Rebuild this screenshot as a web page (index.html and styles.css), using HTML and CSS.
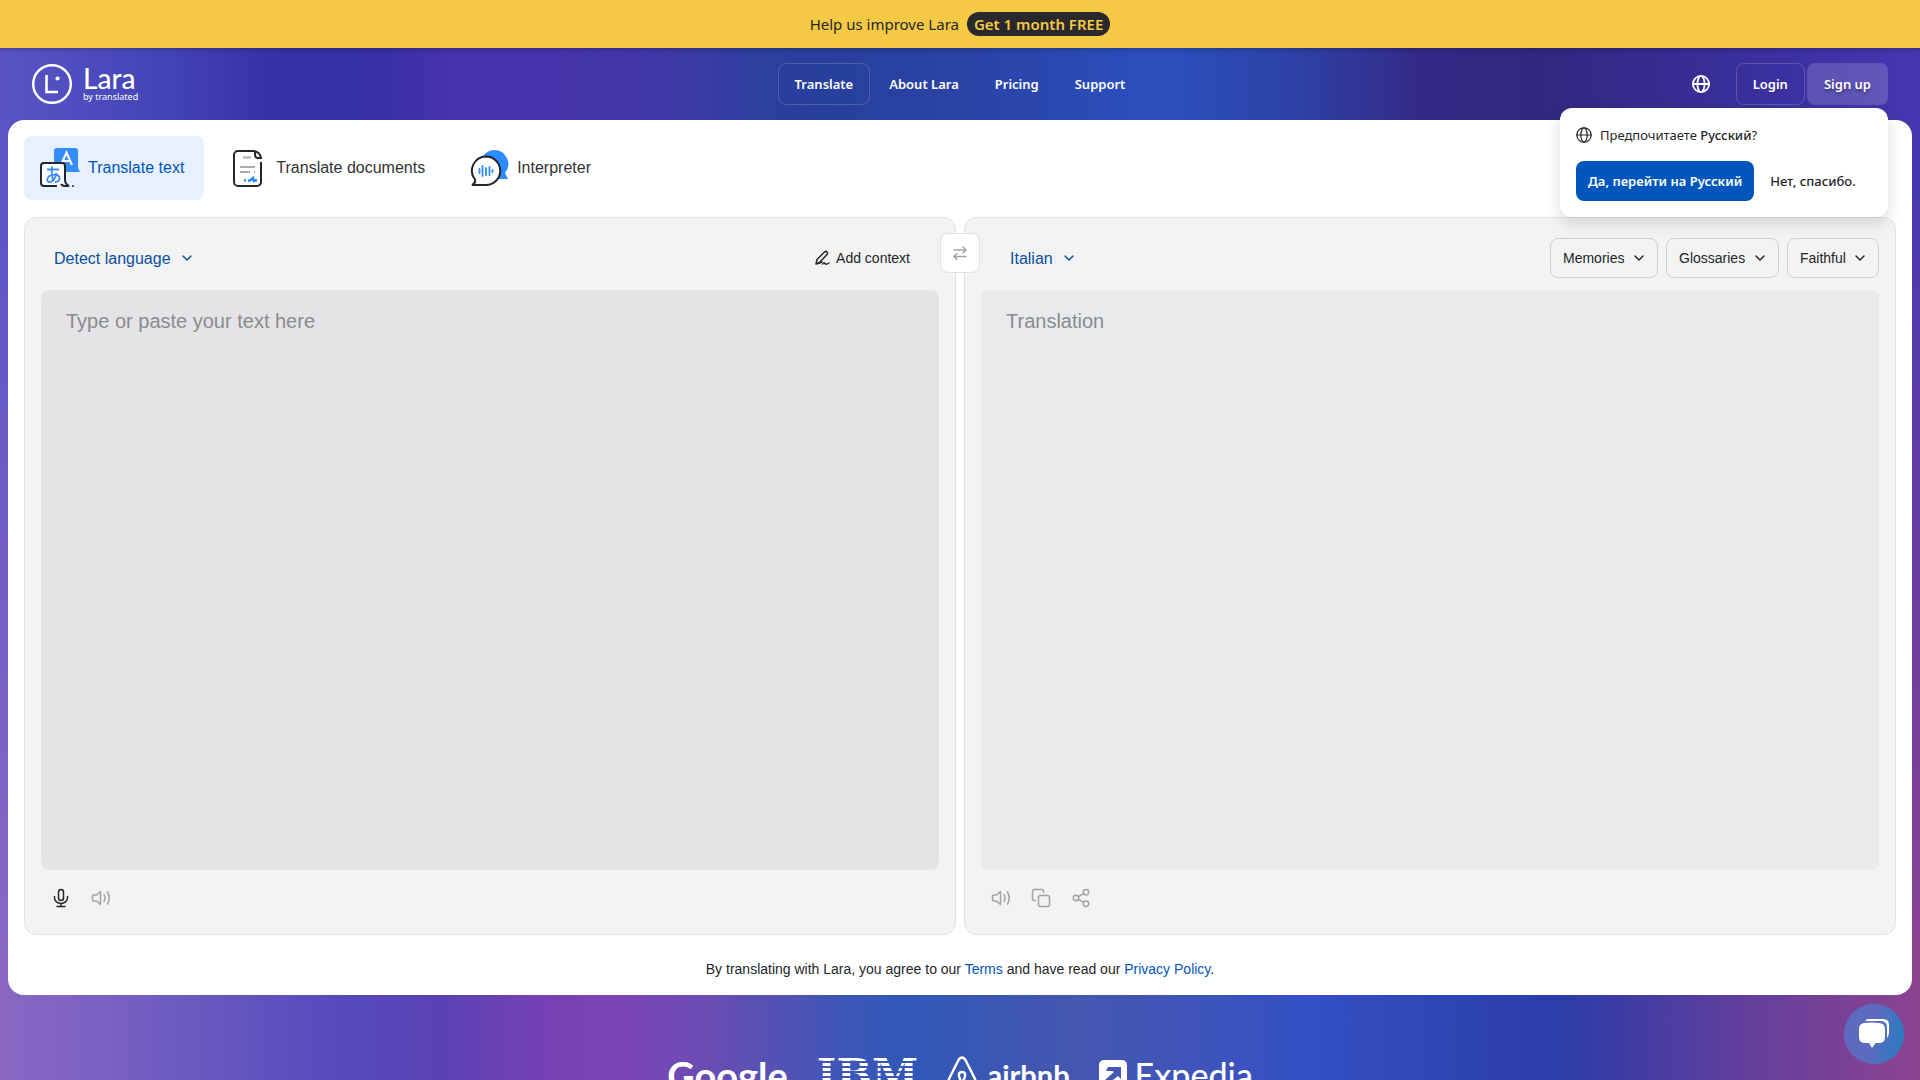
FILE: index.html
```html
<!DOCTYPE html>
<html lang="en">
<head>
    <meta charset="UTF-8">
    <meta name="viewport" content="width=device-width, initial-scale=1.0">
    <title>Lara Translate</title>
    <link rel="stylesheet" href="styles.css">
</head>
<body>
    <svg class="sprite" aria-hidden="true">
        <symbol id="globe" viewBox="0 0 20 20">
            <circle cx="10" cy="10" r="9"/>
            <ellipse cx="10" cy="10" rx="4" ry="9"/>
            <path d="M1 10h18"/>
        </symbol>
        <symbol id="chevron" viewBox="0 0 10 6">
            <path d="M1 1l4 4 4-4"/>
        </symbol>
        <symbol id="speaker" viewBox="0 0 20 20">
            <path d="M9.500 3.500v13L5.500 13H2.500a1 1 0 0 1-1-1V8a1 1 0 0 1 1-1h3zM13 6.500q2 3.500 0 7M16.500 4q3.500 6 0 12"/>
        </symbol>
    </svg>

    <div class="banner">
        <span>Help us improve Lara</span>
        <a class="banner-pill" href="#">Get 1 month FREE</a>
    </div>

    <div class="app">
        <header class="header">
            <a class="logo" href="#">
                <svg class="logo-mark" viewBox="0 0 40 40" aria-hidden="true">
                    <circle cx="20" cy="20" r="18.800" fill="none" stroke="#fff" stroke-width="2.400"/>
                    <path d="M14.500 11v17H26" fill="none" stroke="#fff" stroke-width="2.600"/>
                    <circle cx="25.500" cy="14.500" r="2.100" fill="#fff"/>
                </svg>
                <span class="logo-text">
                    <span class="logo-name">Lara</span>
                    <span class="logo-sub">by translated</span>
                </span>
            </a>
            <nav class="nav">
                <a class="nav-link outlined" href="#">Translate</a>
                <a class="nav-link" href="#">About Lara</a>
                <a class="nav-link" href="#">Pricing</a>
                <a class="nav-link" href="#">Support</a>
            </nav>
            <div class="account">
                <button class="globe-button" type="button" aria-label="Language">
                    <svg class="icon globe"><use href="#globe"/></svg>
                </button>
                <a class="nav-link outlined" href="#">Login</a>
                <a class="nav-link filled" href="#">Sign up</a>
                <div class="popup" lang="ru">
                    <p class="popup-title">
                        <svg class="icon globe-small"><use href="#globe"/></svg>
                        <span>Предпочитаете <b>Русский</b>?</span>
                    </p>
                    <div class="popup-actions">
                        <button class="popup-yes" type="button">Да, перейти на Русский</button>
                        <button class="popup-no" type="button">Нет, спасибо.</button>
                    </div>
                </div>
            </div>
        </header>

        <main class="card">
            <div class="tabs">
                <a class="tab active" href="#">
                    <svg class="tab-icon" viewBox="0 0 40 40" aria-hidden="true">
                        <path d="M17 0h18a3 3 0 0 1 3 3v15q0 3 2 6H17a3 3 0 0 1-3-3V3a3 3 0 0 1 3-3z" fill="#358ef7"/>
                        <path d="M21 17L26.500 4.500 32 17M23 13h7" fill="none" stroke="#fff" stroke-width="2"/>
                        <path d="M17 38H4a3 3 0 0 1-3-3V18a3 3 0 0 1 3-3h18a3 3 0 0 1 3 3v14q0 4 4 6h-4q-3 0-4-2" fill="#fff" stroke="#242629" stroke-width="2"/>
                        <circle cx="33" cy="38" r="1" fill="#242629"/>
                        <path d="M7 21.500h12M12 18.500q-1 7 1 15M16.500 25q-2 9-7 9c-3 0-3-4 0-6 4-2.500 10-1.500 10 2 0 2.500-2 4-4.500 4" fill="none" stroke="#358ef7" stroke-width="1.800"/>
                    </svg>
                    Translate text
                </a>
                <a class="tab" href="#">
                    <svg class="tab-icon" viewBox="0 0 40 40" aria-hidden="true">
                        <path d="M33 14v20a4 4 0 0 1-4 4H10a4 4 0 0 1-4-4V7a4 4 0 0 1 4-4h16q6 1 7 7h-3q-3 0-3-3V3" fill="none" stroke="#242629" stroke-width="2"/>
                        <path d="M15 9.500h8M12 19h15M12 24h10M26 24h1" stroke="#a9abae" stroke-width="2"/>
                        <path d="M16 32.500h2M20 33l3-1 2-2 1 3 3-1" fill="none" stroke="#2b8cff" stroke-width="2.500"/>
                    </svg>
                    Translate documents
                </a>
                <a class="tab" href="#">
                    <svg class="tab-icon" viewBox="0 0 40 40" aria-hidden="true">
                        <path d="M25 2a14 14 0 0 1 11 23l3 6H26L12 12A14 14 0 0 1 25 2z" fill="#2b8cff"/>
                        <path d="M17 8.500A14.200 14.200 0 1 1 17 37H3q4-2 3-5.500A14.200 14.200 0 0 1 17 8.500z" fill="#fff" stroke="#242629" stroke-width="2"/>
                        <path d="M10.500 21v4M13.500 18v10M17 20v7M20.500 19v8M23.500 22v2" stroke="#2b8cff" stroke-width="1.800" stroke-linecap="round"/>
                    </svg>
                    Interpreter
                </a>
            </div>

            <div class="panels">
                <section class="panel">
                    <div class="panel-head">
                        <div class="dropdown language">
                            <select aria-label="Source language"><option>Detect language</option></select>
                            <svg class="icon chevron"><use href="#chevron"/></svg>
                        </div>
                        <button class="context" type="button">
                            <svg class="icon pencil" viewBox="0 0 16 16"><path d="M2 14l1-4.500L10.500 2a1.500 1.500 0 0 1 2.500 2.500L5.500 12.500 2 14c2 0 4-.500 6-2M8.500 14q1.500-2 2.500-.500t4-.500"/></svg>
                            Add context
                        </button>
                    </div>
                    <textarea class="text" aria-label="Source text" placeholder="Type or paste your text here"></textarea>
                    <div class="tools">
                        <button class="tool dark" type="button" aria-label="Dictate">
                            <svg class="icon" viewBox="0 0 20 20"><rect x="7.500" y="1.500" width="5" height="11" rx="2.500"/><path d="M3.500 8.500v1.500a6.500 5.500 0 0 0 13 0V8.500M10 15.500V18M6 18.500h8"/></svg>
                        </button>
                        <button class="tool" type="button" aria-label="Listen">
                            <svg class="icon"><use href="#speaker"/></svg>
                        </button>
                    </div>
                </section>

                <button class="swap" type="button" aria-label="Swap languages">
                    <svg class="icon" viewBox="0 0 14 14"><path d="M1 4h12M10 1l3 3-3 3M13 10.500H1M4 7.500l-3 3 3 3"/></svg>
                </button>

                <section class="panel result">
                    <div class="panel-head">
                        <div class="dropdown language">
                            <select aria-label="Target language"><option>Italian</option></select>
                            <svg class="icon chevron"><use href="#chevron"/></svg>
                        </div>
                        <div class="options">
                            <div class="dropdown boxed">
                                <select aria-label="Memories"><option>Memories</option></select>
                                <svg class="icon chevron"><use href="#chevron"/></svg>
                            </div>
                            <div class="dropdown boxed">
                                <select aria-label="Glossaries"><option>Glossaries</option></select>
                                <svg class="icon chevron"><use href="#chevron"/></svg>
                            </div>
                            <div class="dropdown boxed">
                                <select aria-label="Style"><option>Faithful</option></select>
                                <svg class="icon chevron"><use href="#chevron"/></svg>
                            </div>
                        </div>
                    </div>
                    <textarea class="text" aria-label="Translation" placeholder="Translation" readonly></textarea>
                    <div class="tools">
                        <button class="tool" type="button" aria-label="Listen">
                            <svg class="icon"><use href="#speaker"/></svg>
                        </button>
                        <button class="tool" type="button" aria-label="Copy">
                            <svg class="icon" viewBox="0 0 20 20"><rect x="7.500" y="7.500" width="11" height="11" rx="2"/><path d="M4.500 12.500h-1a2 2 0 0 1-2-2v-7a2 2 0 0 1 2-2h7a2 2 0 0 1 2 2v1"/></svg>
                        </button>
                        <button class="tool" type="button" aria-label="Share">
                            <svg class="icon" viewBox="0 0 20 20"><circle cx="5" cy="10" r="2.700"/><circle cx="15" cy="4.200" r="2.700"/><circle cx="15" cy="15.800" r="2.700"/><path d="M7.500 8.700l5-3M7.500 11.300l5 3"/></svg>
                        </button>
                    </div>
                </section>
            </div>

            <p class="terms">By translating with Lara, you agree to our <a href="#">Terms</a> and have read our <a href="#">Privacy Policy</a>.</p>
        </main>
    </div>

    <section class="clients">
        <span class="client google">Google</span>
        <span class="client ibm">IBM</span>
        <span class="client airbnb">
            <svg class="airbnb-mark" viewBox="0 0 30 34" fill="none" stroke="#fff" stroke-width="2.400" aria-hidden="true">
                <path d="M15 1.500c-2 0-3 1.500-4 3.500L2 23c-2 5 1 9 5 9 3 0 6-3 9-7 3-5 3-9-1-9s-4 4-1 9c3 4 6 7 9 7 4 0 7-4 5-9L19 5c-1-2-2-3.500-4-3.500z"/>
            </svg>
            airbnb
        </span>
        <span class="client expedia">
            <svg class="expedia-mark" viewBox="0 0 28 28" aria-hidden="true">
                <rect width="28" height="28" rx="5" fill="#fff"/>
                <path d="M9 7h13v12l-3-3-9 7H6v-3l9-8-2-1H7z" fill="#4557b4"/>
            </svg>
            Expedia
        </span>
    </section>

    <button class="chat" type="button" aria-label="Open chat">
        <svg viewBox="0 0 32 32" aria-hidden="true">
            <path d="M7 3q1-2 4-2h13c6 0 7 2 7 7v6c0 3-1 5-2 6V10c0-5-2-7-7-7z" fill="#fff"/>
            <path d="M6 5q7.500-1 15 0 6 .500 6 6v8q0 6-6 6h-3.500l-3.500 5-3-5H7q-6 0-6-6v-8q0-5 5-6z" fill="#fff"/>
        </svg>
    </button>
</body>
</html>
```

FILE: styles.css
```css
* {
    box-sizing: border-box;
}

body {
    margin: 0;
    height: 100vh;
    overflow: hidden;
    position: relative;
    font-family: "Liberation Sans", Arial, sans-serif;
    font-size: 14px;
    color: #242629;
    background: linear-gradient(90deg, #8a68c4 0%, #7c61c2 5%, #6a5abf 10%, #5549bd 18%, #5b42b4 23%, #7841b4 29%, #7c43b5 32%, #6a4db2 37%, #3d56b7 44%, #3158b8 47%, #4557b0 56%, #4055b8 61%, #3450c4 68%, #2a3da8 81%, #3b3ca5 84%, #633f9c 91%, #8c4391 100%);
}

/* upper half of the page gradient, fades into the lower one */
body::before {
    content: "";
    position: absolute;
    inset: 0;
    z-index: -1;
    background: linear-gradient(90deg, #5a54c6 0%, #4446b8 8%, #3632a9 14%, #3430a8 17%, #3830a8 20%, #4932ae 24%, #4933ae 27%, #4238a8 34%, #2b3f9d 40%, #27409c 43%, #2a43a6 51%, #2c4cb9 58%, #2c4ebc 61%, #2d43a8 67%, #342a86 74%, #32287f 80%, #3a309f 92%, #4638b0 100%);
    mask-image: linear-gradient(#000 15%, transparent 88%);
}

button, select, textarea {
    font-family: inherit;
    font-size: 14px;
    color: inherit;
    background: none;
    border: none;
    margin: 0;
    padding: 0;
}

button, select {
    cursor: pointer;
}

a {
    color: #0056bb;
    text-decoration: none;
}

.sprite {
    display: none;
}

.icon {
    width: 20px;
    height: 20px;
    fill: none;
    stroke: currentColor;
    stroke-width: 1.5;
    stroke-linecap: round;
    stroke-linejoin: round;
    flex: none;
}

.banner {
    height: 48px;
    display: flex;
    align-items: center;
    justify-content: center;
    gap: 8px;
    background: #f6c945;
    font-family: "Noto Sans", sans-serif;
    font-size: 15px;
}

.banner-pill {
    padding: 0 7px;
    line-height: 24px;
    border-radius: 12px;
    background: #29282d;
    color: #f6c945;
    font-weight: 600;
}

.app {
    min-height: calc(100vh - 133px);
    display: flex;
    flex-direction: column;
}

.header {
    height: 72px;
    padding: 0 32px;
    display: grid;
    grid-template-columns: 1fr auto 1fr;
    align-items: center;
    font-family: "Noto Sans", sans-serif;
    box-shadow: inset 0 6px 6px -6px rgba(0, 0, 0, 0.35);
}

.logo {
    display: flex;
    align-items: center;
    gap: 11px;
    color: #fff;
}

.logo-mark {
    width: 40px;
    height: 40px;
}

.logo-text {
    display: flex;
    flex-direction: column;
}

.logo-name {
    font-family: Lato, sans-serif;
    font-size: 28px;
    line-height: 26px;
    font-weight: 500;
}

.logo-sub {
    font-size: 9px;
    line-height: 12px;
}

.nav, .account {
    display: flex;
    align-items: center;
    gap: 2px;
}

.account {
    position: relative;
    justify-content: flex-end;
}

.nav-link {
    padding: 0 16px;
    line-height: 40px;
    border: 1px solid transparent;
    border-radius: 8px;
    color: #fff;
    font-size: 13px;
    font-weight: 600;
}

.outlined {
    border-color: rgba(255, 255, 255, 0.18);
}

.filled {
    background: rgba(255, 255, 255, 0.16);
    text-shadow: 0 2px 3px rgba(0, 0, 0, 0.4);
}

.globe-button {
    padding: 0 24px;
    height: 40px;
    display: flex;
    align-items: center;
    color: #fff;
}

.globe {
    width: 18px;
    height: 18px;
    stroke-width: 2;
}

.globe-small {
    width: 16px;
    height: 16px;
}

.popup {
    position: absolute;
    top: 45px;
    right: 0;
    z-index: 2;
    width: 328px;
    padding: 16px;
    border-radius: 12px;
    background: #fff;
    box-shadow: 0 6px 16px rgba(0, 0, 0, 0.14);
    font-size: 13px;
}

.popup-title {
    margin: 0 0 15px;
    display: flex;
    align-items: center;
    gap: 8px;
    line-height: 22px;
}

.popup-title b {
    font-weight: 500;
}

.popup-actions {
    display: flex;
    gap: 4px;
}

.popup-actions button {
    height: 40px;
    padding: 0 12px;
    border-radius: 8px;
    font-size: 13px;
    font-weight: 500;
    white-space: nowrap;
}

.popup-actions .popup-yes {
    background: #0056bb;
    color: #fff;
    font-weight: 600;
}

.card {
    flex: 1;
    display: flex;
    flex-direction: column;
    margin: 0 8px;
    padding: 16px;
    border-radius: 16px;
    background: #fff;
}

.tabs {
    display: flex;
    gap: 8px;
    margin-bottom: 17px;
}

.tab {
    height: 64px;
    padding: 0 20px 0 16px;
    display: flex;
    align-items: center;
    gap: 8px;
    border-radius: 8px;
    color: #333;
    font-size: 16px;
}

.tab.active {
    background: #e6f0ff;
    color: #0056bb;
}

.tab-icon {
    width: 40px;
    height: 40px;
}

.panels {
    position: relative;
    flex: 1;
    display: grid;
    grid-template-columns: 1fr 1fr;
    gap: 8px;
}

.panel {
    display: flex;
    flex-direction: column;
    padding: 20px 16px 16px;
    border: 1px solid #e2e2e3;
    border-radius: 12px;
    background: #f3f3f3;
}

.panel-head {
    height: 40px;
    margin-bottom: 12px;
    padding: 0 29px 0 13px;
    display: flex;
    align-items: center;
    justify-content: space-between;
}

.result .panel-head {
    padding: 0 0 0 29px;
}

.dropdown {
    display: flex;
    align-items: center;
}

.dropdown select {
    appearance: none;
    height: 40px;
}

.chevron {
    width: 10px;
    height: 6px;
    pointer-events: none;
}

.language {
    color: #0c4f9f;
}

.language select {
    padding-right: 21px;
    font-size: 16px;
}

.language .chevron {
    margin-left: -10px;
}

.options {
    display: flex;
    gap: 8px;
}

.boxed select {
    padding: 0 32px 0 12px;
    border: 1px solid #cfcfd1;
    border-radius: 8px;
}

.boxed .chevron {
    margin: 0 14px 0 -24px;
}

.context {
    display: flex;
    align-items: center;
    gap: 6px;
}

.pencil {
    width: 16px;
    height: 16px;
}

.text {
    flex: 1;
    width: 100%;
    padding: 19px 25px;
    border-radius: 8px;
    background: #e4e4e6;
    font-size: 20px;
    line-height: 24px;
    resize: none;
}

.text::placeholder {
    color: #8a8a8f;
}

.result .text {
    background: #e9eaec;
}

.tools {
    display: flex;
    margin-top: 8px;
}

.tool {
    width: 40px;
    height: 40px;
    display: flex;
    align-items: center;
    justify-content: center;
    color: #a3a3a5;
}

.tool.dark {
    color: #242629;
}

.swap {
    position: absolute;
    top: 16px;
    left: calc(50% - 20px);
    width: 40px;
    height: 40px;
    display: flex;
    align-items: center;
    justify-content: center;
    border: 1px solid #e0e0e2;
    border-radius: 8px;
    background: #fff;
    color: #a3a3a5;
}

.swap .icon {
    width: 14px;
    height: 14px;
}

.terms {
    margin: 24px 0 0;
    text-align: center;
    line-height: 20px;
}

.clients {
    display: flex;
    justify-content: center;
    align-items: flex-start;
    gap: 29px;
    padding-top: 56px;
    color: #fff;
}

.client {
    display: flex;
    font-family: Lato, sans-serif;
    font-size: 38px;
    line-height: 48px;
    font-weight: bold;
}

/* striped letters */
.ibm {
    font-family: "DejaVu Serif", serif;
    font-size: 42px;
    color: transparent;
    background: repeating-linear-gradient(transparent 0 2px, #fff 2px 5px);
    background-clip: text;
}

.airbnb {
    gap: 10px;
    font-size: 29px;
}

.airbnb-mark {
    width: 30px;
    height: 34px;
    margin-top: 5px;
}

.expedia {
    gap: 8px;
    font-size: 34px;
    font-weight: 500;
}

.expedia-mark {
    width: 28px;
    height: 28px;
    margin-top: 9px;
}

.chat {
    position: fixed;
    right: 16px;
    bottom: 16px;
    width: 60px;
    height: 60px;
    display: flex;
    align-items: center;
    justify-content: center;
    border-radius: 50%;
    background: linear-gradient(100deg, #5c6bbd 50%, #2d7ac0 90%);
}

.chat svg {
    width: 32px;
    height: 32px;
}
```
